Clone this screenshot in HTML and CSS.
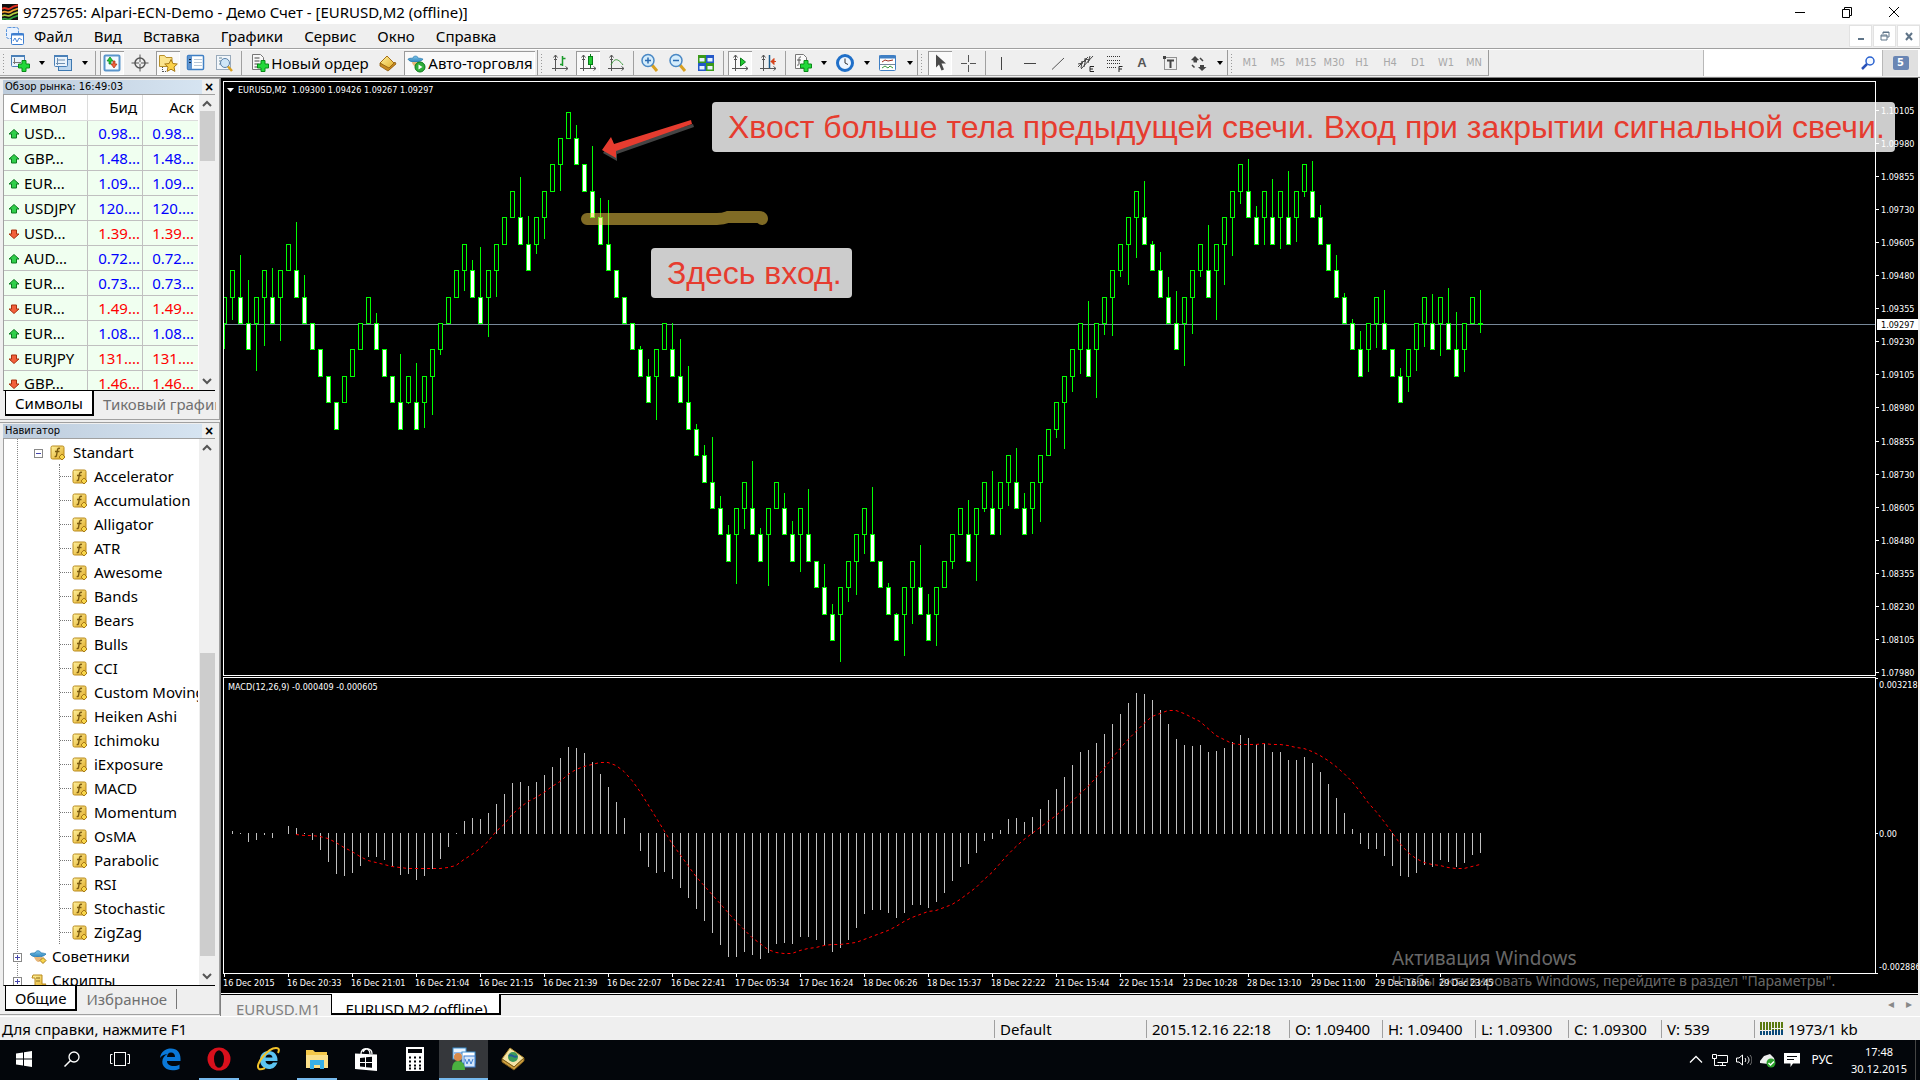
FILE: index.html
```html
<!DOCTYPE html>
<html lang="ru">
<head>
<meta charset="utf-8">
<title>9725765: Alpari-ECN-Demo - Демо Счет - [EURUSD,M2 (offline)]</title>
<link rel="stylesheet" href="styles.css">
</head>
<body>
<svg class="defs" aria-hidden="true">
  <defs>
    <linearGradient id="gold" x1="0" y1="0" x2="1" y2="1"><stop offset="0" stop-color="#fff3a0"/><stop offset="1" stop-color="#e0a820"/></linearGradient>
    <linearGradient id="hat" x1="0" y1="0" x2="0" y2="1"><stop offset="0" stop-color="#7cc4ea"/><stop offset="1" stop-color="#2f86bd"/></linearGradient>
  </defs>
  <symbol id="plus" viewBox="0 0 12 12"><path d="M4 .5h4V4h3.500v4H8v3.500H4V8H.5V4H4z" fill="#22d83a" stroke="#0a8a18"/></symbol>
  <symbol id="axes" viewBox="0 0 20 20"><path d="M5.500 2v16M2 15.500h16M3.500 4.500l2-2.500 2 2.500M15.500 13.500l2.500 2-2.500 2M4 6.500h3" fill="none" stroke="#555"/></symbol>
  <symbol id="func" viewBox="0 0 16 16"><rect x="1" y="1" width="13" height="13" rx="1.500" fill="url(#gold)" stroke="#b98a1c"/><path d="M10 3.500c-2-.8-2.500.5-2.800 3L6.500 10.500c-.3 1.200-1 1.300-1.800.9M5 6.500h4.500" fill="none" stroke="#7a5a10" stroke-width="1.400"/><path d="M12 9l3 3-3 3-3-3z" fill="#f7d54a" stroke="#a87a18"/></symbol>
  <symbol id="up" viewBox="0 0 12 12"><path d="M6 1.500L11 6H8.500v4h-5V6H1z" fill="#2fcf4a" stroke="#0d7a20"/></symbol>
  <symbol id="down" viewBox="0 0 12 12"><path d="M6 10.500L11 6H8.500V2h-5v4H1z" fill="#f2603a" stroke="#a8320f"/></symbol>
  <symbol id="expert" viewBox="0 0 18 16"><path d="M1 5c2 4 13 4 16 0-2-1-4-1-5-1-1-3-5-3-6 0-2 0-4 0-5 1z" fill="url(#hat)" stroke="#2a7aae" stroke-width=".8"/><path d="M5 8c1 3 3 5 5 5 2-1 3-3 3-5z" fill="#e6b67a"/><path d="M14 8.500l3 3-3 3-3-3z" fill="#f7d54a" stroke="#a87a18"/></symbol>
  <symbol id="chevup" viewBox="0 0 12 12"><path d="M2 8l4-4 4 4" fill="none" stroke="#555" stroke-width="2"/></symbol>
  <symbol id="chevdown" viewBox="0 0 12 12"><path d="M2 4l4 4 4-4" fill="none" stroke="#555" stroke-width="2"/></symbol>
</svg>

<header class="titlebar">
  <svg class="app-icon" viewBox="0 0 16 16"><rect width="16" height="16" fill="#111"/><path d="M0 5c4-3 5 2 9-1s4-1 7-3" stroke="#e03020" stroke-width="2" fill="none"/><path d="M0 8.500c4-3 5 2 9-1s4-1 7-3" stroke="#f0a030" stroke-width="1.800" fill="none"/><path d="M0 12c4-3 5 2 9-1s4-1 7-3" stroke="#b0d040" stroke-width="1.800" fill="none"/><path d="M0 15.500c4-3 5 2 9-1s4-1 7-3" stroke="#30a040" stroke-width="1.800" fill="none"/></svg>
  <h1>9725765: Alpari-ECN-Demo - Демо Счет - [EURUSD,M2 (offline)]</h1>
  <div class="win-buttons">
    <button aria-label="Свернуть"><svg viewBox="0 0 12 12"><path d="M1 6.500h10" stroke="#000"/></svg></button>
    <button aria-label="Восстановить"><svg viewBox="0 0 12 12"><path d="M1.500 3.500h7v8h-7zM3.500 3.500v-2h7v8h-2" fill="none" stroke="#000"/></svg></button>
    <button aria-label="Закрыть"><svg viewBox="0 0 12 12"><path d="M1 1l10 10M11 1L1 11" stroke="#000"/></svg></button>
  </div>
</header>

<nav class="menubar">
  <svg class="menu-icon" viewBox="0 0 20 20"><rect x="1.500" y="1.500" width="12" height="11" rx="2" fill="#eaf3ff" stroke="#5a95dc" stroke-dasharray="3 1"/><rect x="6.500" y="7.500" width="12" height="11" rx="1" fill="#fff" stroke="#3f7fd0"/><path d="M6 8.500h13" stroke="#3f7fd0" stroke-width="2"/><path d="M8 15l2-3 2 4 2-4 3 2" stroke="#4a86d6" fill="none"/></svg>
  <a href="#">Файл</a><a href="#">Вид</a><a href="#">Вставка</a><a href="#">Графики</a><a href="#">Сервис</a><a href="#">Окно</a><a href="#">Справка</a>
  <div class="mdi-buttons">
    <button aria-label="Свернуть окно"><svg viewBox="0 0 12 12"><path d="M3 9h6" stroke="#5f7488" stroke-width="2"/></svg></button>
    <button aria-label="Восстановить окно"><svg viewBox="0 0 12 12"><path d="M2 5h6v5H2zM4 4V2h6v5H8M2 6h6M4 2.500h6" fill="none" stroke="#5f7488"/></svg></button>
    <button aria-label="Закрыть окно"><svg viewBox="0 0 12 12"><path d="M3 3l6 7M9 3l-6 7" stroke="#5f7488" stroke-width="2"/></svg></button>
  </div>
</nav>

<div class="toolbars">
  <div class="group">
    <i class="grip"></i>
    <button class="tool" aria-label="Новый график"><svg viewBox="0 0 20 20"><rect x="1.500" y="2.500" width="13" height="11" rx="1" fill="#eaf3fb" stroke="#4a80b8"/><path d="M1 3h14" stroke="#4a80b8" stroke-width="2"/><path d="M4.500 5v6M3 9.500h8" stroke="#777"/><use href="#plus" x="8" y="7" width="12" height="12"/></svg></button><button class="drop" aria-label="Список графиков"></button>
    <button class="tool" aria-label="Профили"><svg viewBox="0 0 20 20"><rect x="5.500" y="6.500" width="13" height="11" fill="#bcd6ee" stroke="#3d78b0"/><rect x="1.500" y="2.500" width="13" height="11" rx="1" fill="#eaf3fb" stroke="#4a80b8"/><path d="M1 3h14" stroke="#4a80b8" stroke-width="2"/><path d="M4.500 5v7M3 10.500h9M4 7h8" stroke="#6f8fb0"/></svg></button><button class="drop" aria-label="Список профилей"></button>
    <i class="sep"></i>
    <button class="tool on" aria-label="Обзор рынка"><svg viewBox="0 0 20 20"><rect x="2.500" y="2.500" width="15" height="15" rx="1" fill="#f4faff" stroke="#5a95cc" stroke-width="2"/><path d="M8 4l3 4H9v3H7V8H5z" fill="#2c3" stroke="#0a7a1a" stroke-width=".7"/><path d="M12 15l3-4h-2V8h-2v3H9z" fill="#f2603a" stroke="#a8320f" stroke-width=".7"/></svg></button>
    <button class="tool" aria-label="Окно данных"><svg viewBox="0 0 20 20"><circle cx="10" cy="10" r="5" fill="none" stroke="#555" stroke-width="1.500"/><path d="M10 1.500v17M1.500 10h17" stroke="#555"/><circle cx="10" cy="10" r="1" fill="#fff"/></svg></button>
    <button class="tool on" aria-label="Навигатор"><svg viewBox="0 0 20 20"><path d="M1.500 2.500h5l1.500 2h6v9h-12.500z" fill="#fbe48e" stroke="#b8902a"/><path d="M4.500 14v5M5 18.500h4" stroke="#555" stroke-dasharray="1 1"/><path d="M13 6.500l1.900 4 4.400.5-3.300 3 .9 4.400-3.900-2.200-3.900 2.200.9-4.400-3.300-3 4.400-.5z" fill="#fbd24a" stroke="#a87a18"/></svg></button>
    <button class="tool" aria-label="Терминал"><svg viewBox="0 0 20 20"><rect x="1.500" y="2.500" width="16" height="14" rx="1" fill="#fff" stroke="#3f7fc4" stroke-width="1.500"/><rect x="2" y="3" width="4" height="13" fill="#5f94d0"/><path d="M8 6.500h8M8 9.500h8M8 12.500h8" stroke="#b8c8d8"/><path d="M3 6.500h2M3 9.500h2" stroke="#123"/></svg></button>
    <button class="tool" aria-label="Тестер стратегий"><svg viewBox="0 0 20 20"><rect x="2.500" y="2.500" width="14" height="14" fill="#f2f6fa" stroke="#9ab" /><path d="M5 5h3M5 8h2M5 11h2" stroke="#689"/><circle cx="11" cy="10" r="4.500" fill="#cfe6f8" stroke="#5a80a8"/><path d="M14 13.500l4 4.500" stroke="#d8a020" stroke-width="2.500"/></svg></button>
    <i class="sep"></i>
    <button class="tool labelled order"><svg viewBox="0 0 20 20"><path d="M3.500 1.500h8l3 3v12h-11z" fill="#f8f8f8" stroke="#777"/><path d="M5.500 5h5M5.500 8h5M5.500 11h4M5.500 14h3" stroke="#444"/><use href="#plus" x="8" y="7" width="12" height="12"/></svg>Новый ордер</button>
    <button class="tool" aria-label="MetaEditor"><svg viewBox="0 0 20 20"><path d="M2 10l7-7 8 8-6 6z" fill="url(#gold)" stroke="#a87018"/><path d="M2 10v3l8 5 8-7-1-2-6 6z" fill="#c88a20" stroke="#8a5a10" stroke-width=".8"/></svg></button>
    <button class="tool labelled auto on"><svg viewBox="0 0 20 20"><use href="#expert" x="1" y="1" width="17" height="16"/><circle cx="14" cy="14" r="5" fill="#2fae3a" stroke="#0c7a1a"/><path d="M12.500 11.500v5l4-2.500z" fill="#fff"/></svg>Авто-торговля</button>
  </div>
  <div class="group">
    <i class="grip"></i>
    <button class="tool" aria-label="Бары"><svg viewBox="0 0 20 20"><use href="#axes"/><path d="M12.500 3v10M12.500 5.500h3M10 11.500h3" stroke="#1a9a2a" stroke-width="1.500"/></svg></button>
    <button class="tool on" aria-label="Свечи"><svg viewBox="0 0 20 20"><use href="#axes"/><path d="M12.500 1v14" stroke="#0a7a1a"/><rect x="10.500" y="3.500" width="4" height="8" fill="#2c3" stroke="#0a7a1a"/></svg></button>
    <button class="tool" aria-label="Линия"><svg viewBox="0 0 20 20"><use href="#axes"/><path d="M5 12c3-6 6-8 12 0" stroke="#3a9a3a" fill="none"/></svg></button>
    <i class="sep"></i>
    <button class="tool" aria-label="Увеличить"><svg viewBox="0 0 20 20"><path d="M12 12l5 6" stroke="#d8a020" stroke-width="3"/><circle cx="8" cy="7.500" r="6" fill="#d4ecfb" stroke="#4a88c4" stroke-width="1.500"/><path d="M5 7.500h6M8 4.500v6" stroke="#2a6ab0" stroke-width="1.500"/></svg></button>
    <button class="tool" aria-label="Уменьшить"><svg viewBox="0 0 20 20"><path d="M12 12l5 6" stroke="#d8a020" stroke-width="3"/><circle cx="8" cy="7.500" r="6" fill="#d4ecfb" stroke="#4a88c4" stroke-width="1.500"/><path d="M5 7.500h6" stroke="#2a6ab0" stroke-width="1.500"/></svg></button>
    <button class="tool" aria-label="Окна мозаикой"><svg viewBox="0 0 20 20"><rect x="2" y="2" width="8" height="8" fill="#3a9a1a"/><rect x="10" y="2" width="8" height="8" fill="#2458c8"/><rect x="2" y="10" width="8" height="8" fill="#2458c8"/><rect x="10" y="10" width="8" height="8" fill="#3a9a1a"/><path d="M3.500 5h5v3.500h-5zM11.500 5h5v3.500h-5zM3.500 13h5v3.500h-5zM11.500 13h5v3.500h-5z" fill="#e8f4ff"/></svg></button>
    <i class="sep"></i>
    <button class="tool on" aria-label="Автопрокрутка"><svg viewBox="0 0 20 20"><use href="#axes"/><path d="M10.500 5v8l5-4z" fill="#2c3" stroke="#0a7a1a"/></svg></button>
    <button class="tool" aria-label="Сдвиг графика"><svg viewBox="0 0 20 20"><use href="#axes"/><path d="M11.500 2v13" stroke="#1a5a8a" stroke-width="1.500"/><path d="M13 8.500h5M13 8.500l3-3v6z" fill="#d4421a" stroke="#d4421a"/></svg></button>
    <i class="sep"></i>
    <button class="tool" aria-label="Индикаторы"><svg viewBox="0 0 20 20"><path d="M3.500 1.500h8l3 3v11h-11z" fill="#fafafa" stroke="#777"/><path d="M9 4c-2-.5-2 1-2 3v4c0 1-1 1.500-2 1M5 7h4" stroke="#555" fill="none"/><use href="#plus" x="8" y="7" width="12" height="12"/></svg></button><button class="drop" aria-label="Список индикаторов"></button>
    <button class="tool" aria-label="Периоды"><svg viewBox="0 0 20 20"><circle cx="10" cy="10" r="7.500" fill="#eef6ff" stroke="#1f6fc8" stroke-width="3"/><path d="M10 5.500V10l3 1.500" stroke="#333" fill="none"/></svg></button><button class="drop" aria-label="Список периодов"></button>
    <button class="tool" aria-label="Шаблоны"><svg viewBox="0 0 20 20"><rect x="1.500" y="2.500" width="16" height="15" rx="1" fill="#fff" stroke="#3f7fc4"/><path d="M1 4h17" stroke="#3f7fc4" stroke-width="3"/><path d="M4 9l3-2 3 1 5-1" stroke="#a03020" fill="none"/><path d="M2 11.500h15" stroke="#789"/><path d="M4 15l3-2 3 2 2-2 3 2" stroke="#3a9a3a" fill="none"/></svg></button><button class="drop" aria-label="Список шаблонов"></button>
  </div>
  <div class="group">
    <i class="grip"></i>
    <button class="tool on" aria-label="Курсор"><svg viewBox="0 0 20 20"><path d="M6 1.500v13l3-3 2.500 6 2.500-1-2.500-6H16z" fill="#4a4a4a"/></svg></button>
    <button class="tool" aria-label="Перекрестие"><svg viewBox="0 0 20 20"><path d="M10.500 2v7M10.500 12v7M3 10.500h6M12 10.500h6" stroke="#555"/></svg></button>
    <i class="sep"></i>
    <button class="tool" aria-label="Вертикальная линия"><svg viewBox="0 0 20 20"><path d="M9.500 4v13" stroke="#444"/></svg></button>
    <button class="tool" aria-label="Горизонтальная линия"><svg viewBox="0 0 20 20"><path d="M4 10.500h12" stroke="#444"/></svg></button>
    <button class="tool" aria-label="Трендовая линия"><svg viewBox="0 0 20 20"><path d="M4 16.500L16 5" stroke="#555"/></svg></button>
    <button class="tool" aria-label="Канал"><svg viewBox="0 0 20 20"><path d="M2 14L12 4M5 16L17 3M2 11l5-1M5 9l5-1M8 6l6 1M5 15l1-6M8 14l2-9M12 10l2-7" stroke="#444" fill="none"/><path d="M18 13.500h-4v5h4M14 16h3" stroke="#222" fill="none"/></svg></button>
    <button class="tool" aria-label="Фибоначчи"><svg viewBox="0 0 20 20"><path d="M3 3.500h14M3 7.500h14M3 10.500h14M3 14.500h10" stroke="#333" stroke-dasharray="1 1"/><path d="M18.500 13.500H15v5.500M15 16h3" stroke="#222" fill="none"/></svg></button>
    <button class="tool letter" aria-label="Текст">A</button>
    <button class="tool" aria-label="Метка"><svg viewBox="0 0 20 20"><rect x="4.500" y="4.500" width="12" height="12" fill="none" stroke="#333" stroke-dasharray="1 1"/><path d="M7 7.500h7M10.500 7v8" stroke="#444" stroke-width="2"/><path d="M3 3h3v3H3z" fill="#444"/></svg></button>
    <button class="tool" aria-label="Стрелки"><svg viewBox="0 0 20 20"><path d="M7 3l4 4-2 .5v2H5.500v-2L3 7zM14 18l-4-4h2v-2h4v2h2.500z" fill="#444"/><path d="M4 12l2.500 2.500M12 5l3 3" stroke="#444" stroke-width="1.500"/></svg></button><button class="drop" aria-label="Список стрелок"></button>
  </div>
  <div class="group periods">
    <i class="grip"></i>
    <button disabled>M1</button><button disabled>M5</button><button disabled>M15</button><button disabled>M30</button><button disabled>H1</button><button disabled>H4</button><button disabled>D1</button><button disabled>W1</button><button disabled>MN</button>
  </div>
  <label class="search"><input type="text" aria-label="Поиск"><svg viewBox="0 0 16 16"><circle cx="10" cy="6" r="4" fill="#f4f9ff" stroke="#2a62d0" stroke-width="1.500"/><path d="M7 9l-5 5" stroke="#2a52b8" stroke-width="2.500"/></svg></label>
  <button class="chat" aria-label="Сообщения"><span>5</span></button>
</div>

<main class="work">
  <aside class="dock">
    <section class="panel market">
      <div class="caption"><h2>Обзор рынка: 16:49:03</h2><button aria-label="Закрыть панель">×</button></div>
      <div class="list">
        <div class="view">
          <table>
            <thead><tr><th>Символ</th><th>Бид</th><th>Аск</th></tr></thead>
            <tbody>
              <tr><td><svg><use href="#up"/></svg>USD...</td><td>0.98...</td><td>0.98...</td></tr>
              <tr><td><svg><use href="#up"/></svg>GBP...</td><td>1.48...</td><td>1.48...</td></tr>
              <tr><td><svg><use href="#up"/></svg>EUR...</td><td>1.09...</td><td>1.09...</td></tr>
              <tr><td><svg><use href="#up"/></svg>USDJPY</td><td>120....</td><td>120....</td></tr>
              <tr class="fall"><td><svg><use href="#down"/></svg>USD...</td><td>1.39...</td><td>1.39...</td></tr>
              <tr><td><svg><use href="#up"/></svg>AUD...</td><td>0.72...</td><td>0.72...</td></tr>
              <tr><td><svg><use href="#up"/></svg>EUR...</td><td>0.73...</td><td>0.73...</td></tr>
              <tr class="fall"><td><svg><use href="#down"/></svg>EUR...</td><td>1.49...</td><td>1.49...</td></tr>
              <tr><td><svg><use href="#up"/></svg>EUR...</td><td>1.08...</td><td>1.08...</td></tr>
              <tr class="fall"><td><svg><use href="#down"/></svg>EURJPY</td><td>131....</td><td>131....</td></tr>
              <tr class="fall"><td><svg><use href="#down"/></svg>GBP...</td><td>1.46...</td><td>1.46...</td></tr>
            </tbody>
          </table>
        </div>
        <div class="scroll"><svg><use href="#chevup"/></svg><i class="thumb"></i><svg class="end"><use href="#chevdown"/></svg></div>
      </div>
      <div class="tabs"><button class="active">Символы</button><button>Тиковый график</button></div>
    </section>
    <section class="panel navigator">
      <div class="caption"><h2>Навигатор</h2><button aria-label="Закрыть панель">×</button></div>
      <div class="list">
        <div class="view">
          <ul class="tree">
            <li class="folder"><i class="box minus"></i><svg><use href="#func"/></svg>Standart
              <ul>
                <li><svg><use href="#func"/></svg>Accelerator</li><li><svg><use href="#func"/></svg>Accumulation</li><li><svg><use href="#func"/></svg>Alligator</li><li><svg><use href="#func"/></svg>ATR</li><li><svg><use href="#func"/></svg>Awesome</li><li><svg><use href="#func"/></svg>Bands</li><li><svg><use href="#func"/></svg>Bears</li><li><svg><use href="#func"/></svg>Bulls</li><li><svg><use href="#func"/></svg>CCI</li><li><svg><use href="#func"/></svg>Custom Moving Average</li><li><svg><use href="#func"/></svg>Heiken Ashi</li><li><svg><use href="#func"/></svg>Ichimoku</li><li><svg><use href="#func"/></svg>iExposure</li><li><svg><use href="#func"/></svg>MACD</li><li><svg><use href="#func"/></svg>Momentum</li><li><svg><use href="#func"/></svg>OsMA</li><li><svg><use href="#func"/></svg>Parabolic</li><li><svg><use href="#func"/></svg>RSI</li><li><svg><use href="#func"/></svg>Stochastic</li><li><svg><use href="#func"/></svg>ZigZag</li>
              </ul>
            </li>
            <li class="root"><i class="box plus"></i><svg><use href="#expert"/></svg>Советники</li>
            <li class="root"><i class="box plus"></i><svg viewBox="0 0 18 16"><path d="M4 2h9v9h4l-2 3H6V5H3z" fill="url(#gold)" stroke="#b98a1c"/><path d="M7 5h4M7 8h4" stroke="#8a6a18"/></svg>Скрипты</li>
          </ul>
        </div>
        <div class="scroll"><svg><use href="#chevup"/></svg><i class="thumb low"></i><svg class="end"><use href="#chevdown"/></svg></div>
      </div>
      <div class="tabs"><button class="active">Общие</button><button class="last">Избранное</button></div>
    </section>
  </aside>

  <section class="charts">
    <div class="chart">
      <svg class="pane price" id="price"><path d="M3 6h7l-3.500 4z" fill="#fff"/><text x="14" y="11">EURUSD,M2&#160; 1.09300 1.09426 1.09267 1.09297</text></svg>
      <svg class="scale" id="priceScale"></svg>
      <svg class="pane macd" id="macd"><text x="4" y="12">MACD(12,26,9) -0.000409 -0.000605</text></svg>
      <svg class="scale" id="macdScale"></svg>
      <svg class="times" id="times"></svg>
      <svg class="marks">
        <path d="M471 43L393 66L390 59L381 72L395 80L395 73L472 46Z" transform="translate(1 3)" fill="#444"/>
        <path d="M470 42L393 66L390 59L381 72L395 80L395 73L471 46Z" fill="#e63c2f"/>
        <path d="M366 141H496q6 0 11-2h31q3 0 3 2" fill="none" stroke="#ffd54a" stroke-opacity=".5" stroke-width="12" stroke-linecap="round"/>
      </svg>
      <p class="note first">Хвост больше тела предыдущей свечи. Вход при закрытии сигнальной свечи.</p>
      <p class="note second">Здесь вход.</p>
      <div class="watermark"><b>Активация Windows</b><span>Чтобы активировать Windows, перейдите в раздел "Параметры".</span></div>
    </div>
    <div class="chart-tabs">
      <button>EURUSD,M1</button><button class="active">EURUSD,M2 (offline)</button>
      <span class="arrows"><i>◂</i><i>▸</i></span>
    </div>
  </section>
</main>

<footer class="status">
  <span class="help">Для справки, нажмите F1</span>
  <span class="profile">Default</span>
  <span class="date">2015.12.16 22:18</span>
  <span class="quote">O: 1.09400</span><span class="quote">H: 1.09400</span><span class="quote">L: 1.09300</span><span class="quote">C: 1.09300</span><span class="quote">V: 539</span>
  <span class="traffic"><svg viewBox="0 0 24 14"><path d="M0 4h24" stroke="#5a7a10" stroke-width="8" stroke-dasharray="2 1"/><path d="M0 10.500h24" stroke="#0a4a7a" stroke-width="5" stroke-dasharray="2 1"/><path d="M0 8.500h12M12 6.500h12" stroke="#efefef"/></svg>1973/1 kb</span>
</footer>

<nav class="taskbar">
  <button class="sys" aria-label="Пуск"><svg viewBox="0 0 16 16"><path d="M0 2.500L7 1.500V7.500H0zM8 1.300L16 0V7.500H8zM0 8.500H7V14.500L0 13.500zM8 8.500H16V16L8 14.700z" fill="#fff"/></svg></button>
  <button class="sys" aria-label="Поиск"><svg viewBox="0 0 16 16"><circle cx="10" cy="6" r="5" fill="none" stroke="#fff" stroke-width="1.300"/><path d="M6.500 9.500L.5 15.500" stroke="#fff" stroke-width="1.500"/></svg></button>
  <button class="sys" aria-label="Представление задач"><svg class="wide" viewBox="0 0 20 16"><rect x="4.500" y="1.500" width="11" height="13" fill="none" stroke="#fff"/><path d="M2.500 3.500h-2v9h2M17.500 3.500h2v9h-2" fill="none" stroke="#fff"/></svg></button>
  <button aria-label="Edge"><svg class="big" viewBox="0 0 24 24"><path d="M2 11C3 4 8 1.500 13 1.500c6 0 9.500 4 9.500 10v2.500H9c0 3.500 3 5 6.500 5 2.500 0 4.500-.7 6-1.600v4.400c-2 1-4.500 1.500-7 1.500C8 23.300 4 19 4.300 14.500 4.500 11 6.500 8.500 9.500 7 6 7.300 3.500 9 2 11zM9 10h8c0-3-1.500-4.500-4-4.500S9.300 7.300 9 10z" fill="#0a78d8"/></svg></button>
  <button class="running" aria-label="Opera"><svg class="big" viewBox="0 0 24 24"><ellipse cx="12" cy="12" rx="11.500" ry="11.500" fill="#d8101c"/><ellipse cx="12" cy="12" rx="5" ry="8.700" fill="#04060a"/></svg></button>
  <button aria-label="Internet Explorer"><svg class="big" viewBox="0 0 24 24"><path d="M4 13C4 7 8 4 13 4s9 4 8.500 10H9.500c.3 4 6 4.500 7.500 1.500h4.500C19.500 20 17 22 13 22c-5 0-9-3.500-9-9zm5.500-2.500h7c-.3-4-6.500-4-7 0z" fill="#5cc4f2"/><path d="M3 22C-2 18 12 1 20 1c4 0 3 3 2 5M3 22c2 1 4 0 6-1" fill="none" stroke="#f2c22a" stroke-width="2"/></svg></button>
  <button class="running" aria-label="Проводник"><svg class="big" viewBox="0 0 24 24"><path d="M1 3h7l2 2h12v16H1z" fill="#f4c84a"/><path d="M1 8h22v13H1z" fill="#fbe08a"/><path d="M5 13h14v9h-4v-4H9v4H5z" fill="#38b0e8"/></svg></button>
  <button aria-label="Магазин"><svg class="big" viewBox="0 0 24 24"><path d="M7 7c0-7 9-7 9 0M9 5c2-5 9-4 9 2" fill="none" stroke="#fff" stroke-width="1.300"/><path d="M1 6.500l22 1V24L1 22z" fill="#fff"/><path d="M6 11l5-.5V15H6zM12 10.300l6-.5V15h-6zM6 16h5v4l-5-.4zM12 16h6v4.700l-6-.5z" fill="#04060a"/></svg></button>
  <button aria-label="Калькулятор"><svg class="big" viewBox="0 0 24 24"><rect x="3" width="18" height="24" fill="#fff"/><path d="M5 2h14v4H5z" fill="#04060a"/><path d="M6 10.500h12M6 14.500h12M6 18.500h12M6 21.500h12" stroke="#04060a" stroke-width="2" stroke-dasharray="2 3"/></svg></button>
  <button class="running current" aria-label="MetaTrader"><svg class="big" viewBox="0 0 24 24"><rect x="1" y="1" width="13" height="11" fill="#e8f4ff" stroke="#3f8fd0"/><rect x="10" y="5" width="13" height="11" fill="#fff" stroke="#3f8fd0"/><rect x="12" y="9" width="11" height="11" fill="#d4e6fa" stroke="#3f7fd0"/><path d="M2 6h8M13 12l2 5 2-5 2 5 2-5" stroke="#3f7fd0" fill="none"/><circle cx="6" cy="10" r="4" fill="#d88a4a"/><path d="M0 23c0-6 2-9 6-9s7 3 7 9z" fill="#4ab040"/></svg></button>
  <button aria-label="Редактор"><svg class="big" viewBox="0 0 24 24"><path d="M1 12L9 1l14 10-10 9z" fill="#f4e4a8" stroke="#b89030"/><path d="M1 12v3l12 8 10-9v-3l-10 9z" fill="#d0a040" stroke="#7a5a18"/><circle cx="12" cy="10" r="5" fill="#3a9a5a"/><path d="M8 9c3-3 5 3 8 0" stroke="#245a9a" fill="none" stroke-width="2"/></svg></button>
  <div class="tray">
    <svg viewBox="0 0 16 16"><path d="M2 10.500l6-6 6 6" fill="none" stroke="#fff" stroke-width="1.300"/></svg>
    <svg viewBox="0 0 16 16"><path d="M5.500 3.500h10v7h-10M.5 2.500h4v4h-4zM2.500 7v6.500h5M8 13.500h6M10.500 11v2" fill="none" stroke="#fff"/></svg>
    <svg viewBox="0 0 16 16"><path d="M.5 6v4h2.500l3.500 3V3L3 6z" fill="none" stroke="#fff"/><path d="M9 6c1 1.500 1 2.500 0 4M11.500 4.500c2 2.500 2 4.500 0 7" fill="none" stroke="#fff"/><path d="M14 3c2.500 3 2.500 7 0 10" fill="none" stroke="#777"/></svg>
    <svg viewBox="0 0 16 16"><path d="M0 9l4-5 6-2 4 4 1 4-7 2-8-1z" fill="#eee"/><circle cx="11" cy="11" r="4.500" fill="#2aa02a"/><path d="M8.500 11l2 2 3.500-3.500" stroke="#fff" stroke-width="1.500" fill="none"/></svg>
    <svg viewBox="0 0 16 16"><path d="M0 1h16v10.500H9L6.500 15v-3.500H0z" fill="#fff"/><path d="M3 4.500h10M3 7.500h7" stroke="#04060a"/></svg>
    <span class="lang">РУС</span>
    <time><span>17:48</span><span>30.12.2015</span></time>
    <i class="show-desktop"></i>
  </div>
</nav>
<script src="chart.js"></script>
</body>
</html>
```
FILE: styles.css
```css
* { box-sizing: border-box; }
body {
  margin: 0; height: 100vh; min-height: 700px; display: flex; flex-direction: column;
  overflow: hidden; background: #efefef; color: #000;
  font: 15px/20px "Noto Sans", "Open Sans", sans-serif;
}
h1, h2, p, ul { margin: 0; padding: 0; font: inherit; }
button { font: inherit; color: inherit; background: none; border: 0; padding: 0; margin: 0; }
a { color: inherit; text-decoration: none; }
ul { list-style: none; }
.defs { position: absolute; width: 0; height: 0; }

.titlebar { height: 24px; flex: none; display: flex; align-items: center; background: #fff; padding: 0 3px 0 2px; }
.app-icon { width: 16px; height: 16px; margin-right: 5px; }
.win-buttons { margin-left: auto; display: flex; }
.win-buttons button { width: 47px; height: 22px; display: grid; place-items: center; }
.win-buttons svg { width: 12px; height: 12px; }

.menubar { height: 24px; flex: none; display: flex; align-items: center; padding-left: 5px; }
.menu-icon { width: 20px; height: 20px; margin-right: -1px; }
.menubar a { padding: 0 11px 0 10px; }
.mdi-buttons { margin-left: auto; display: flex; gap: 1px; }
.mdi-buttons button { width: 23px; height: 22px; display: grid; place-items: center; background: #fff; border: 1px solid #e2e2e2; }
.mdi-buttons svg { width: 12px; height: 12px; }

.toolbars { height: 30px; flex: none; display: flex; border-top: 1px solid #a0a0a0; border-bottom: 1px solid #808080; padding: 1px 0; box-shadow: inset 0 1px #fff; }
.group { display: flex; align-items: center; border-right: 1px solid #9a9a9a; border-bottom: 1px solid #a8a8a8; }
.grip { width: 8px; height: 20px; background: radial-gradient(circle, #999 1px, transparent 1px) 2px 0 / 3px 3px repeat-y; }
.group:first-child .grip { width: 6px; }
.sep { width: 6px; height: 24px; background: linear-gradient(#a0a0a0, #a0a0a0) center / 1px 100% no-repeat; }
.tool { width: 28px; height: 24px; display: flex; align-items: center; justify-content: center; background-clip: padding-box; border: solid transparent; border-width: 0 2px; }
.tool svg { width: 20px; height: 20px; flex: none; }
.tool.on { background-color: #f9f9f9; box-shadow: inset 1px 1px #9a9a9a, inset -1px -1px #fff; }
.tool.labelled { gap: 2px; white-space: nowrap; }
.order { width: 130px; }
.auto { width: 135px; }
.letter { font: bold 13px "Liberation Sans", sans-serif; color: #555; }
.drop { width: 15px; height: 20px; display: grid; place-items: center; }
.drop::before { content: ""; border: 3px solid transparent; border-top: 4px solid #000; border-bottom: 0; }
.periods button { width: 28px; font: 11px "DejaVu Sans Condensed", sans-serif; color: #a8a8a8; }
.search { margin-left: auto; width: 180px; display: flex; align-items: center; background: #fff; border: 1px solid #b8b8b8; border-width: 0 1px; }
.search input { flex: 1; min-width: 0; border: 0; outline: 0; background: none; }
.search svg { width: 16px; height: 16px; margin-right: 6px; }
.chat { width: 37px; display: grid; place-items: center; background: #e0e0e0; border-right: 2px solid #fff; }
.chat span { width: 16px; height: 14px; font: bold 11px/14px "DejaVu Sans Condensed", sans-serif; color: #fff; background: #6a86b4; border-radius: 2px; }

.work { flex: 1; min-height: 0; display: flex; border-bottom: 1px solid #fff; }
.dock { width: 221px; flex: none; display: flex; flex-direction: column; gap: 2px; padding-bottom: 1px; border-right: 1px solid #808080; }
.panel { display: flex; flex-direction: column; border: solid #a0a0a0; border-width: 1px 1px 1px 0; padding: 1px 3px 2px 3px; min-height: 0; }
.market { height: 342px; flex: none; }
.navigator { flex: 1; }
.caption { height: 14px; flex: none; display: flex; justify-content: space-between; background: linear-gradient(90deg, #bccbdb, #d8e6f3); }
.caption h2 { font: 11px/13px "DejaVu Sans Condensed", sans-serif; padding-left: 2px; }
.caption button { width: 14px; background: #efefef; font: bold 14px/12px "Liberation Sans", sans-serif; }
.list { flex: 1; min-height: 0; display: flex; background: #fff; margin-right: 1px; border: 1px solid #a0a0a0; border-right: 0; border-bottom-color: #000; overflow: hidden; }
.view { flex: 1; min-width: 0; overflow: hidden; }
.scroll { width: 17px; flex: none; display: flex; flex-direction: column; align-items: center; background: #efefef; padding: 2px 0; border-left: 1px solid #fff; }
.scroll svg { width: 12px; height: 14px; flex: none; }
.scroll .thumb { width: 15px; height: 50px; background: #cdcdcd; }
.scroll .thumb.low { height: 303px; margin-top: auto; margin-bottom: 13px; }
.scroll .end { margin-top: auto; }
.scroll .low + .end { margin-top: 0; }
table { width: 100%; table-layout: fixed; border-collapse: collapse; }
th { height: 25px; padding: 0 5px 0 0; font-weight: 400; text-align: right; border-right: 1px solid #dcdcdc; border-bottom: 1px solid #dcdcdc; }
th:first-child { width: 83px; text-align: left; padding-left: 6px; }
td { height: 25px; padding: 0 2px 0 0; text-align: right; white-space: nowrap; background: #f0fff0; border-right: 1px solid #c0c0c0; border-bottom: 1px solid #c0c0c0; color: #00f; line-height: 20px; }
td:last-child, th:last-child { border-right: 0; padding-right: 4px; }
td:first-child { color: #000; text-align: left; padding-left: 4px; }
td svg { width: 12px; height: 12px; margin-right: 4px; vertical-align: -1px; }
.fall td + td { color: #f00; }
.tabs { height: 26px; flex: none; display: flex; padding-left: 2px; overflow: hidden; white-space: nowrap; }
.tabs button { height: 25px; padding: 0 9px; color: #707070; }
.tabs .active { color: #000; background: #fff; border: solid #000; border-width: 0 2px 2px 1px; }
.tabs .last { border-right: 1px solid #777; height: 20px; align-self: center; }
.tree { background: linear-gradient(#888 50%, transparent 0) 13px 0 / 1px 2px repeat-y; padding-top: 1px; white-space: nowrap; }
.tree li { line-height: 24px; }
.tree svg { width: 16px; height: 16px; margin-right: 6px; vertical-align: -3px; }
.folder { padding-left: 30px; }
.folder > svg { margin: 0 7px; }
.folder ul { margin-left: 25px; border-left: 1px dotted #777; }
.folder ul li::before { content: ""; display: inline-block; width: 11px; margin-right: 1px; border-top: 1px dotted #777; vertical-align: 5px; }
.root { padding-left: 9px; }
.root svg { width: 18px; margin: 0 5px 0 7px; }
.box { display: inline-block; width: 9px; height: 9px; border: 1px solid #888; background: linear-gradient(#44a, #44a) center / 5px 1px no-repeat, #fff; }
.box.plus { background: linear-gradient(#44a, #44a) center / 5px 1px no-repeat, linear-gradient(#44a, #44a) center / 1px 5px no-repeat, #fff; }

.charts { flex: 1; min-width: 0; display: flex; flex-direction: column; padding-right: 2px; }
.chart { position: relative; flex: 1; min-height: 0; display: grid; grid-template: minmax(0, 1fr) 297px 19px / minmax(0, 1fr) 42px; background: #000; padding: 3px 0 0 2px; overflow: hidden; }
.chart svg { display: block; width: 100%; height: 100%; overflow: hidden; }
.chart text { font: 9px "DejaVu Sans Condensed", sans-serif; fill: #fff; }
.pane { border: 1px solid #fff; }
.chart .price, .chart .price + .scale { height: calc(100% - 1px); }
.times { grid-column: 1 / 3; }
.chart .marks { position: absolute; left: 0; top: 0; pointer-events: none; }
.note { position: absolute; border-radius: 4px; background: rgba(255, 255, 255, .8); color: #e63c2f; font: 32px/50px "Liberation Sans", sans-serif; white-space: nowrap; padding: 0 10px 0 16px; }
.note.first { left: 491px; top: 24px; }
.note.second { left: 430px; top: 170px; }
.watermark { position: absolute; left: 1171px; bottom: 1px; display: flex; flex-direction: column; color: rgba(255, 255, 255, .42); white-space: nowrap; }
.watermark b { font-weight: 400; font-size: 19px; line-height: 24px; }
.watermark span { font-size: 14px; line-height: 22px; }
.chart-tabs { height: 23px; flex: none; display: flex; border-top: 1px solid #fff; box-shadow: inset 0 1px #000; overflow: hidden; }
.chart-tabs button { height: 21px; padding: 5px 11px 0 13px; line-height: 20px; color: #808080; overflow: hidden; align-self: flex-start; }
.chart-tabs button:first-child { margin-left: 2px; }
.chart-tabs .active { color: #000; background: #fff; border: solid #000; border-width: 0 2px 2px 1px; }
.arrows { margin-left: auto; display: flex; gap: 12px; padding-right: 6px; color: #888; font: 12px/20px "DejaVu Sans", sans-serif; }
.arrows i { font-style: normal; }

.status { height: 23px; flex: none; display: flex; align-items: center; }
.status span { padding-left: 5px; height: 18px; line-height: 18px; border-left: 1px solid #a0a0a0; white-space: nowrap; }
.status .help { flex: 1; border: 0; padding-left: 2px; }
.profile { width: 152px; }
.date { width: 143px; }
.quote { width: 93px; }
.traffic { width: 166px; display: flex; align-items: center; gap: 4px; }
.traffic svg { width: 24px; height: 14px; }

.taskbar { height: 40px; flex: none; display: flex; background: #03060b; color: #fff; }
.taskbar button { width: 49px; display: grid; place-items: center; border-bottom: 2px solid transparent; }
.taskbar .sys { width: 48px; }
.taskbar .sys:nth-child(3) { margin-right: 1px; }
.taskbar svg { width: 16px; height: 16px; }
.taskbar .wide { width: 20px; }
.taskbar .big { width: 24px; height: 24px; }
.taskbar .running { background: linear-gradient(#76b9ed, #76b9ed) center bottom / 40px 2px no-repeat border-box; }
.taskbar .current { background: linear-gradient(#76b9ed, #76b9ed) center bottom / 100% 2px no-repeat border-box, #35373b; }
.tray { margin-left: auto; display: flex; align-items: center; gap: 8px; font-size: 12px; }
.lang { margin-left: 3px; }
time { display: flex; flex-direction: column; align-items: center; font-size: 11px; line-height: 17px; width: 68px; margin-left: 4px; }
.show-desktop { align-self: stretch; width: 5px; border-left: 1px solid #444; margin-left: -6px; }
```
FILE: chart.js
```js
const NS = 'http://www.w3.org/2000/svg';
const STEP = 8;

function add(parent, name, attrs, text) {
  const el = document.createElementNS(NS, name);
  for (const key in attrs) el.setAttribute(key, attrs[key]);
  if (text) el.textContent = text;
  parent.appendChild(el);
}

/* Renko bricks: direction, brick row, and the end of the wick where there is one. */
const bricks = `u7:349 u6:320 d7:255 d8:280 u7:371 u6:346 d7:268 u6:341 u5 d6:222 d7:275 d8 d9 d10 d11 u10 u9 u8 u7
d8:313 d9 d10 d11:354 u10:404 d11:363 u10:428 u9:415 u8:355 u7 u6 u5:291 d6:260 d7:247 u6:337 u5:297 u4 u3 d4:177
d5:216 u4:254 u3:239 u2 u1:191 u0 d1:125 d2 d3:146 d4:198 d5:200 d6 d7 d8 d9:346 d10:359 u9:420 u8 d9:323 d10:339
d11:366 d12:424 d13:445 d14:437 d15:496 d16:525 u15:584 u14:529 d15:461 d16:528 u15:586 u14 d15:493 d16:521 u15:572
d16:489 d17 d18:564 d19:604 u18:662 u17:602 u16:595 u15:554 d16:487 d17 d18:583 d19:613 u18:656 u17:624 d18:545
d19:594 u18:646 u17 u16:569 u15 d16:500 u15:581 u14:512 d15:471 u14:535 u13:506 d14:448 d15:493 u14:534 u13:522 u12
u11:438 u10:449 u9:392 u8:374 d9:301 u8:398 u7:335 u6:336 u5:277 u4:285 u3:258 d4:181 d5:241 d6:252 d7:277 d8:291
u7:366 u6:334 u5:277 d6:225 u5:320 u4:285 u3:256 u2:204 d3:159 d4:206 u3:245 d4:179 u3:249 d4:171 u3:242 u2:197
d3:161 d4:205 d5 d6:255 d7:293 d8:319 d9:331 u8:372 u7:348 d8:290 d9 d10:368 u9:392 u8:371 u7:347 d8:294 u7:356
d8:288 d9:312 u8:372 u7`.split(/\s+/);
const rows = [112, 138, 164, 191, 217, 244, 270, 297, 323, 349, 376, 402, 429, 455, 482, 508, 534, 561, 587, 614, 640];
const TOP = 82;

const price = document.getElementById('price');
add(price, 'rect', { x: 0, y: 324 - TOP, width: '100%', height: 1, fill: '#778899' });
bricks.forEach((code, i) => {
  const [body, wick] = code.split(':');
  const up = body[0] === 'u';
  const row = Number(body.slice(1));
  const top = rows[row] - TOP;
  const bottom = rows[row + 1] - TOP + 1;
  const x = i * STEP;
  if (wick) {
    const end = wick - TOP;
    const from = up ? bottom : end;
    const to = up ? end : top;
    add(price, 'rect', { x, y: from, width: 1, height: Math.max(1, to - from), fill: '#00ff00' });
  }
  add(price, 'rect', { x: x - 1.5, y: top + .5, width: 4, height: bottom - top - 1, fill: up ? '#000' : '#fff', stroke: '#00ff00' });
});
const last = bricks.length * STEP;
add(price, 'rect', { x: last, y: 290 - TOP, width: 1, height: 43, fill: '#00ff00' });
add(price, 'rect', { x: last - 2, y: 323 - TOP, width: 5, height: 2, fill: '#00ff00' });

/* Price labels start at 1.10105 and fall by 0.00125. */
const scale = document.getElementById('priceScale');
for (let k = 0; k < 18; k++) {
  const y = Math.round(29 + k * 33.05);
  add(scale, 'rect', { x: 0, y, width: 3, height: 1, fill: '#fff' });
  add(scale, 'text', { x: 5, y: y + 4 }, (1.10105 - k * 0.00125).toFixed(5));
}
add(scale, 'rect', { x: 1, y: 238, width: 41, height: 11, fill: '#fff' });
add(scale, 'text', { x: 5, y: 247, style: 'fill:#000' }, '1.09297');

const bars = [831, 833, 842, 840, 835, 838, 833, 826, 828, 834, 840, 850, 862, 874, 876, 873, 866, 857, 857, 860, 866, 875,
  874, 880, 876, 869, 859, 847, 833, 821, 818, 819, 813, 804, 794, 783, 782, 786, 782, 775, 767, 758, 747, 748, 753, 762,
  774, 787, 802, 818, 833, 851, 867, 873, 872, 879, 888, 898, 909, 921, 933, 945, 957, 957, 952, 955, 959, 953, 944, 943,
  944, 937, 937, 940, 945, 952, 948, 940, 928, 914, 910, 910, 913, 918, 913, 905, 905, 908, 902, 893, 881, 867, 864, 853,
  841, 839, 830, 819, 818, 822, 817, 809, 800, 789, 777, 765, 752, 750, 743, 734, 724, 714, 703, 693, 694, 700, 710, 724,
  739, 745, 746, 745, 752, 751, 748, 742, 735, 738, 745, 744, 752, 752, 760, 760, 757, 763, 772, 784, 798, 813, 829, 844,
  849, 849, 856, 866, 876, 877, 873, 865, 867, 860, 862, 867, 863, 855, 853];
const signal = [834, 835, 835, 836, 838, 842, 847, 851, 856, 860, 862, 864, 866, 867, 868, 868, 868, 868, 868, 867, 865,
  859, 854, 848, 841, 831, 824, 814, 807, 801, 797, 792, 786, 781, 774, 769, 766, 764, 762, 762, 765, 771, 780, 791, 804,
  817, 830, 843, 854, 865, 876, 885, 894, 903, 912, 921, 929, 937, 943, 949, 952, 953, 953, 950, 948, 947, 945, 944, 944,
  943, 942, 939, 936, 933, 930, 926, 921, 917, 914, 911, 910, 907, 904, 899, 893, 887, 879, 872, 863, 854, 846, 839, 833,
  827, 821, 815, 808, 801, 793, 786, 777, 768, 758, 748, 739, 731, 723, 716, 713, 710, 710, 713, 717, 721, 728, 735, 739,
  743, 744, 744, 744, 743, 744, 744, 745, 747, 748, 751, 755, 760, 766, 773, 781, 791, 802, 811, 821, 832, 843, 852, 858,
  862, 864, 865, 867, 868, 868, 866, 864];
const MACD_TOP = 678;
const ZERO = 833;
const macd = document.getElementById('macd');
bars.forEach((value, i) => {
  if (value === ZERO && i !== 1 && i !== 28) return;
  const y = Math.min(value, ZERO);
  add(macd, 'rect', { x: (i + 1) * STEP, y: y - MACD_TOP, width: 1, height: Math.max(value, ZERO + 1) - y, fill: '#c0c0c0' });
});
add(macd, 'polyline', {
  points: signal.map((v, i) => `${(i + 9) * STEP},${v - MACD_TOP + .5}`).join(' '),
  fill: 'none', stroke: '#ff0000', 'stroke-dasharray': '3 3'
});

const macdScale = document.getElementById('macdScale');
add(macdScale, 'text', { x: 3, y: 11 }, '0.003218');
add(macdScale, 'text', { x: 3, y: 160 }, '0.00');
add(macdScale, 'text', { x: 3, y: 293 }, '-0.002886');
for (const y of [1, 156, 296]) add(macdScale, 'rect', { x: 0, y, width: 2, height: 1, fill: '#fff' });

const times = document.getElementById('times');
['16 Dec 2015', '16 Dec 20:33', '16 Dec 21:01', '16 Dec 21:04', '16 Dec 21:15', '16 Dec 21:39', '16 Dec 22:07',
  '16 Dec 22:41', '17 Dec 05:34', '17 Dec 16:24', '18 Dec 06:26', '18 Dec 15:37', '18 Dec 22:22', '21 Dec 15:44',
  '22 Dec 15:14', '23 Dec 10:28', '28 Dec 13:10', '29 Dec 11:00', '29 Dec 16:06', '29 Dec 23:45'].forEach((label, i) => {
  add(times, 'rect', { x: 1 + i * 64, y: 0, width: 1, height: 3, fill: '#fff' });
  add(times, 'text', { x: i * 64, y: 12 }, label);
});
```
